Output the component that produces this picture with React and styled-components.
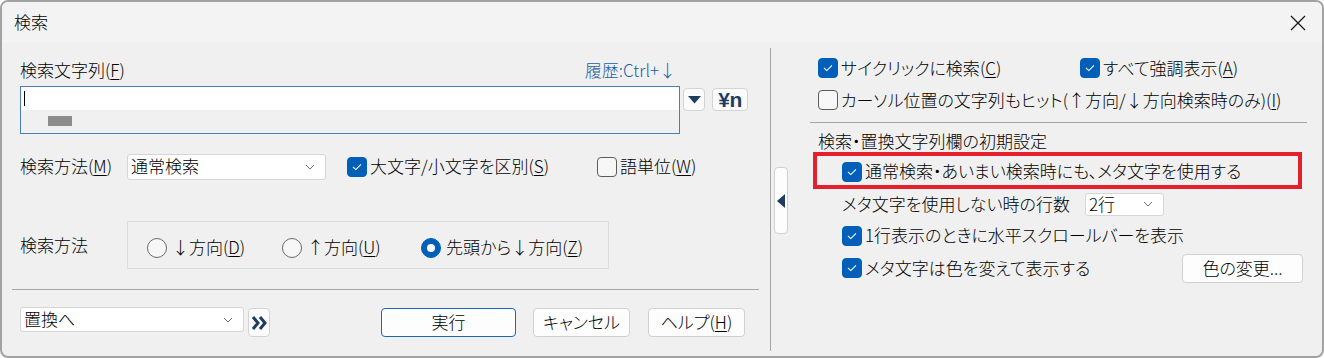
import React from 'react'
import styled, { createGlobalStyle } from 'styled-components'

const GlobalStyle = createGlobalStyle`
  html, body { margin: 0; padding: 0; background: #ffffff; }
  body { font-family: "Noto Sans CJK JP", "Noto Sans", sans-serif; }
`

const NAVY = '#1f3d63'
const BLUE = '#005fb8'

const Window = styled.div`
  width: 1324px;
  height: 358px;
  box-sizing: border-box;
  border: 2px solid #a2a2a2;
  border-radius: 8px;
  overflow: hidden;
  background: #f0f0f0;
  display: flex;
  flex-direction: column;
  font-size: 17px;
  font-weight: 300;
  line-height: 1.3;
  color: #000;
  font-feature-settings: 'palt';
`
const TitleBar = styled.div`
  height: 41px;
  flex: none;
  display: flex;
  align-items: center;
  justify-content: space-between;
  padding: 0 16px 0 12px;
  background: #f3f3f3;
`
const Body = styled.div`
  flex: 1;
  display: flex;
  min-height: 0;
`
const LeftPanel = styled.div`
  width: 750px;
  flex: none;
  padding: 16px 0 0 18px;
  display: flex;
  flex-direction: column;
`
const LabelRow = styled.div`
  width: 660px;
  height: 22px;
  display: flex;
  align-items: center;
  justify-content: space-between;
`
const History = styled.span`
  color: #1d5fa3;
  font-size: 17px;
  padding-right: 4px;
`
const InputRow = styled.div`
  margin-top: 5px;
  display: flex;
  align-items: flex-start;
`
const SearchBox = styled.div`
  width: 660px;
  height: 48px;
  box-sizing: border-box;
  border: 1px solid #4a7db3;
  background: #f0f0f0;
  display: flex;
  flex-direction: column;
`
const EditLine = styled.div`
  height: 23px;
  background: #fff;
  padding: 4px 3px;
  box-sizing: border-box;
`
const Caret = styled.div`
  width: 1px;
  height: 15px;
  background: #000;
`
const PreviewLine = styled.div`
  padding: 6px 0 0 27px;
`
const Block = styled.div`
  width: 24px;
  height: 10px;
  background: #8c8c8c;
`
const SmallButton = styled.div`
  width: ${p => p.$w}px;
  height: ${p => p.$h || 23}px;
  margin: ${p => p.$m || '0'};
  box-sizing: border-box;
  background: #fbfbfb;
  border: 1px solid #d3d3d3;
  border-radius: 4px;
  display: flex;
  align-items: center;
  justify-content: center;
  flex: none;
`
const YenN = styled.span`
  color: ${NAVY};
  font-family: 'Liberation Sans', Arial, sans-serif;
  font-weight: bold;
  font-size: 21px;
  line-height: 1;
  letter-spacing: -0.5px;
`
const FormRow = styled.div`
  margin-top: ${p => p.$top}px;
  height: ${p => p.$h}px;
  display: flex;
  align-items: center;
`
const FieldLabel = styled.div`
  width: 107px;
  flex: none;
`
const Select = styled.div`
  width: ${p => p.$w}px;
  height: ${p => p.$h}px;
  box-sizing: border-box;
  background: #fff;
  border: 1px solid #d6d6d6;
  border-radius: 3px;
  display: flex;
  align-items: center;
  justify-content: space-between;
  padding: 0 10px 0 3px;
  flex: none;
  margin: ${p => p.$m || '0'};
`
const CheckItem = styled.label`
  display: flex;
  align-items: center;
  gap: 3px;
  flex: none;
  width: ${p => (p.$w ? `${p.$w}px` : 'auto')};
  margin-left: ${p => p.$ml || 0}px;
`
const Box = styled.span`
  width: 20px;
  height: 20px;
  box-sizing: border-box;
  border-radius: 4px;
  flex: none;
  display: flex;
  align-items: center;
  justify-content: center;
  background: ${p => (p.$on ? BLUE : '#f7f7f7')};
  border: 1px solid ${p => (p.$on ? BLUE : '#5c5c5c')};
`
const GroupBox = styled.div`
  width: 482px;
  height: 48px;
  box-sizing: border-box;
  border: 1px solid #dcdcdc;
  display: flex;
  align-items: center;
  padding: 5px 0 0 19px;
`
const RadioItem = styled.label`
  display: flex;
  align-items: center;
  gap: 5px;
  width: ${p => (p.$w ? `${p.$w}px` : 'auto')};
  flex: none;
`
const Circle = styled.span`
  width: 20px;
  height: 20px;
  box-sizing: border-box;
  border-radius: 50%;
  flex: none;
  display: flex;
  align-items: center;
  justify-content: center;
  background: ${p => (p.$on ? BLUE : '#f7f7f7')};
  border: 1px solid ${p => (p.$on ? BLUE : '#6a6a6a')};
  &::after {
    content: '';
    display: ${p => (p.$on ? 'block' : 'none')};
    width: 8px;
    height: 8px;
    border-radius: 50%;
    background: #fff;
  }
`
const HLine = styled.div`
  height: 1px;
  background: #a6a6a6;
  width: ${p => p.$w}px;
  margin: ${p => p.$m};
  flex: none;
`
const BottomRow = styled.div`
  margin-top: 18px;
  display: flex;
  align-items: flex-start;
`
const Button = styled.div`
  width: ${p => p.$w}px;
  height: 29px;
  box-sizing: border-box;
  background: #fdfdfd;
  border: 1px solid ${p => (p.$primary ? '#1a67b3' : '#d0d0d0')};
  border-radius: 4px;
  display: flex;
  align-items: center;
  justify-content: center;
  margin-left: ${p => (p.$push ? 'auto' : `${p.$ml || 0}px`)};
  margin-right: ${p => p.$mr || 0}px;
  flex: none;
`
const Divider = styled.div`
  width: 20px;
  flex: none;
  display: flex;
`
const VLine = styled.div`
  width: 1px;
  background: #a6a6a6;
  margin: 5px 0 5px;
`
const Collapse = styled.div`
  width: 14px;
  height: 67px;
  margin: 124px 0 0 3px;
  box-sizing: border-box;
  background: #fdfdfd;
  border: 1px solid #d0d0d0;
  border-radius: 4px;
  display: flex;
  align-items: center;
  justify-content: center;
`
const RightPanel = styled.div`
  flex: 1;
  padding: 9px 15px 0 20px;
  display: flex;
  flex-direction: column;
`
const OptRow = styled.div`
  height: ${p => p.$h}px;
  display: flex;
  align-items: center;
  padding-left: ${p => p.$indent}px;
  flex: none;
`
const Header = styled.div`
  margin-top: 8px;
  height: 21px;
  display: flex;
  align-items: center;
  padding-left: 8px;
`
const Highlight = styled.div`
  margin-left: 3px;
  width: 489px;
  height: 37px;
  box-sizing: border-box;
  border: 4px solid #e3202c;
  display: flex;
  align-items: center;
  padding: 2px 0 0 25px;
`
const RowLabel = styled.span`
  width: ${p => p.$w}px;
  flex: none;
`
const Underline = styled.span`
  text-decoration: underline;
  text-underline-offset: 2px;
`

const Key = ({ k }) => (
  <>
    (<Underline>{k}</Underline>)
  </>
)

const Chevron = () => (
  <svg width="10" height="6" viewBox="0 0 10 6">
    <polyline points="1,1 5,5 9,1" fill="none" stroke="#707070" strokeWidth="1" />
  </svg>
)

const Check = ({ on, children, w, ml }) => (
  <CheckItem $w={w} $ml={ml}>
    <Box $on={on}>
      {on && (
        <svg width="12" height="10" viewBox="0 0 12 10">
          <polyline points="2,5 4.8,7.6 10,2.4" fill="none" stroke="#fff" strokeWidth="1.1" />
        </svg>
      )}
    </Box>
    <span>{children}</span>
  </CheckItem>
)

const Radio = ({ on, children, w }) => (
  <RadioItem $w={w}>
    <Circle $on={on} />
    <span>{children}</span>
  </RadioItem>
)

export default function App() {
  return (
    <>
      <GlobalStyle />
      <Window>
        <TitleBar>
          <span>検索</span>
          <svg width="16" height="16" viewBox="0 0 16 16">
            <path d="M1 1 L15 15 M15 1 L1 15" stroke="#1a1a1a" strokeWidth="1.3" />
          </svg>
        </TitleBar>
        <Body>
          <LeftPanel>
            <LabelRow>
              <span>
                検索文字列<Key k="F" />
              </span>
              <History>履歴:Ctrl+↓</History>
            </LabelRow>
            <InputRow>
              <SearchBox>
                <EditLine>
                  <Caret />
                </EditLine>
                <PreviewLine>
                  <Block />
                </PreviewLine>
              </SearchBox>
              <SmallButton $w={22} $m="2px 0 0 3px">
                <svg width="13" height="8" viewBox="0 0 13 8">
                  <polygon points="0,0 13,0 6.5,7.5" fill={NAVY} />
                </svg>
              </SmallButton>
              <SmallButton $w={36} $m="2px 0 0 7px">
                <YenN>¥n</YenN>
              </SmallButton>
            </InputRow>

            <FormRow $top={19} $h={27}>
              <FieldLabel>
                検索方法<Key k="M" />
              </FieldLabel>
              <Select $w={199} $h={26}>
                <span>通常検索</span>
                <Chevron />
              </Select>
              <Check on w={250} ml={21}>
                大文字/小文字を区別<Key k="S" />
              </Check>
              <Check>
                語単位<Key k="W" />
              </Check>
            </FormRow>

            <FormRow $top={41} $h={48}>
              <FieldLabel>検索方法</FieldLabel>
              <GroupBox>
                <Radio w={135}>
                  ↓方向<Key k="D" />
                </Radio>
                <Radio w={139}>
                  ↑方向<Key k="U" />
                </Radio>
                <Radio on>
                  先頭から↓方向<Key k="Z" />
                </Radio>
              </GroupBox>
            </FormRow>

            <HLine $w={747} $m="20px 0 0 -8px" />

            <BottomRow>
              <Select $w={224} $h={25} $m="-1px 0 0 0">
                <span>置換へ</span>
                <Chevron />
              </Select>
              <SmallButton $w={22} $h={29} $m="0 0 0 4px">
                <svg width="16" height="16" viewBox="0 0 16 16">
                  <polyline points="2,2 7,8 2,14" fill="none" stroke={NAVY} strokeWidth="3" />
                  <polyline points="9,2 14,8 9,14" fill="none" stroke={NAVY} strokeWidth="3" />
                </svg>
              </SmallButton>
              <Button $w={135} $ml={111} $primary>
                実行
              </Button>
              <Button $w={97} $ml={17}>
                キャンセル
              </Button>
              <Button $w={97} $ml={18}>
                ヘルプ<Key k="H" />
              </Button>
            </BottomRow>
          </LeftPanel>

          <Divider>
            <VLine />
            <Collapse>
              <svg width="8" height="14" viewBox="0 0 8 14">
                <polygon points="8,0 8,14 0,7" fill={NAVY} />
              </svg>
            </Collapse>
          </Divider>

          <RightPanel>
            <OptRow $h={32} $indent={8}>
              <Check on w={262}>
                サイクリックに検索<Key k="C" />
              </Check>
              <Check on>
                すべて強調表示<Key k="A" />
              </Check>
            </OptRow>
            <OptRow $h={32} $indent={8}>
              <Check>
                カーソル位置の文字列もヒット(↑方向/↓方向検索時のみ)<Key k="I" />
              </Check>
            </OptRow>
            <HLine $w={497} $m="6px 0 0 0" />
            <Header>検索・置換文字列欄の初期設定</Header>
            <Highlight>
              <Check on>通常検索・あいまい検索時にも、メタ文字を使用する</Check>
            </Highlight>
            <OptRow $h={30} $indent={32}>
              <RowLabel $w={243}>メタ文字を使用しない時の行数</RowLabel>
              <Select $w={79} $h={23}>
                <span>2行</span>
                <Chevron />
              </Select>
            </OptRow>
            <OptRow $h={33} $indent={32}>
              <Check on>1行表示のときに水平スクロールバーを表示</Check>
            </OptRow>
            <OptRow $h={32} $indent={32}>
              <Check on>メタ文字は色を変えて表示する</Check>
              <Button $w={121} $mr={4} $push>
                色の変更...
              </Button>
            </OptRow>
          </RightPanel>
        </Body>
      </Window>
    </>
  )
}
